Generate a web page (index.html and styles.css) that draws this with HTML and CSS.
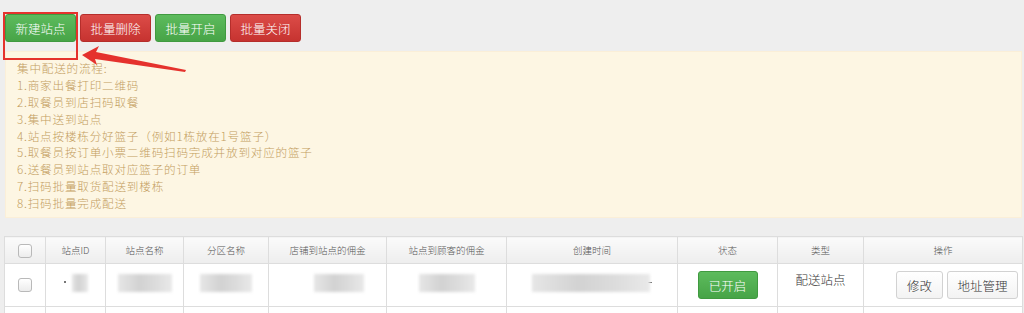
FILE: index.html
```html
<!DOCTYPE html>
<html lang="zh-CN">
<head>
<meta charset="utf-8">
<title>站点管理</title>
<link rel="stylesheet" href="styles.css">
</head>
<body>
<div class="page">
  <div class="toolbar">
    <button class="btn btn-green">新建站点</button>
    <button class="btn btn-red">批量删除</button>
    <button class="btn btn-green">批量开启</button>
    <button class="btn btn-red">批量关闭</button>
  </div>
  <div class="alert">
    <div class="line">集中配送的流程:</div>
    <div class="line">1.商家出餐打印二维码</div>
    <div class="line">2.取餐员到店扫码取餐</div>
    <div class="line">3.集中送到站点</div>
    <div class="line">4.站点按楼栋分好篮子（例如1栋放在1号篮子）</div>
    <div class="line">5.取餐员按订单小票二维码扫码完成并放到对应的篮子</div>
    <div class="line">6.送餐员到站点取对应篮子的订单</div>
    <div class="line">7.扫码批量取货配送到楼栋</div>
    <div class="line">8.扫码批量完成配送</div>
  </div>
  <table class="grid">
    <colgroup>
      <col class="c1"><col class="c2"><col class="c3"><col class="c4"><col class="c5">
      <col class="c6"><col class="c7"><col class="c8"><col class="c9"><col class="c10">
    </colgroup>
    <thead>
      <tr>
        <th><span class="chk"></span></th>
        <th>站点ID</th>
        <th>站点名称</th>
        <th>分区名称</th>
        <th>店铺到站点的佣金</th>
        <th>站点到顾客的佣金</th>
        <th>创建时间</th>
        <th>状态</th>
        <th>类型</th>
        <th>操作</th>
      </tr>
    </thead>
    <tbody>
      <tr>
        <td class="mid"><span class="chk"></span></td>
        <td><span class="dot"></span><span class="blur b-id"></span></td>
        <td><span class="blur b-name"></span></td>
        <td><span class="blur b-zone"></span></td>
        <td><span class="blur b-fee1"></span></td>
        <td><span class="blur b-fee2"></span></td>
        <td><span class="blur b-time"></span><span class="dash"></span></td>
        <td class="mid"><span class="btn btn-green btn-state">已开启</span></td>
        <td class="type">配送站点</td>
        <td class="ops"><span class="btn btn-white">修改</span><span class="btn btn-white btn-wide">地址管理</span></td>
      </tr>
      <tr class="next">
        <td></td><td></td><td></td><td></td><td></td><td></td><td></td><td></td><td></td><td></td>
      </tr>
    </tbody>
  </table>

  <div class="mark-box"></div>
  <svg class="mark-arrow" width="200" height="80" viewBox="0 0 200 80">
    <polygon points="82,55 99,46 96,52 186,70 185,72 95,59 97,65" fill="#e5322d"/>
  </svg>
</div>
</body>
</html>
```
FILE: styles.css
```css
html, body {
  margin: 0;
  padding: 0;
  background: #eeeeee;
}
body {
  font-family: "Noto Sans CJK SC", "Noto Sans", sans-serif;
  width: 1024px;
  height: 313px;
  overflow: hidden;
}
.page {
  position: relative;
  padding: 14px 2px 0 4px;
}
.toolbar {
  display: flex;
  gap: 4px;
  padding-left: 1px;
}
.btn {
  display: inline-flex;
  align-items: center;
  justify-content: center;
  box-sizing: border-box;
  width: 71px;
  height: 28px;
  padding: 0;
  border-radius: 3px;
  font-family: inherit;
  font-size: 12.5px;
  font-weight: 300;
  color: #fff;
  border: 1px solid transparent;
  cursor: pointer;
}
.btn-green {
  background: linear-gradient(#5dbb5d, #47a447);
  border-color: #409a40;
}
.btn-red {
  background: linear-gradient(#dc4c48, #c63330);
  border-color: #b52e2b;
}
.btn-white {
  background: linear-gradient(#ffffff, #f3f3f3);
  border-color: #d2d2d2;
  color: #333;
  width: 47px;
}
.btn-wide { width: 71px; }
.btn-state { width: 60px; }

.alert {
  margin: 9px 0 0 1px;
  height: 167px;
  box-sizing: border-box;
  padding: 8px 11px 0;
  background: #fdf6e3;
  border: 1px solid #fbefd8;
  color: #c39d5e;
  font-size: 11.6px;
  letter-spacing: 0.8px;
  font-weight: 300;
}
.line {
  height: 16.9px;
  line-height: 16.9px;
}

.grid {
  margin-top: 18px;
  width: 1018px;
  table-layout: fixed;
  border-collapse: collapse;
  background: #fff;
}
.c1 { width: 41px; }
.c2 { width: 60px; }
.c3 { width: 78px; }
.c4 { width: 85px; }
.c5 { width: 118px; }
.c6 { width: 120px; }
.c7 { width: 171px; }
.c8 { width: 100px; }
.c9 { width: 86px; }
.c10 { width: 159px; }

.grid th, .grid td {
  border: 1px solid #dddddd;
  padding: 0;
  text-align: center;
}
.grid th {
  height: 26px;
  background: linear-gradient(#fbfbfb, #eeeeee);
  font-weight: 300;
  font-size: 9.5px;
  color: #555;
  vertical-align: middle;
}
.grid tbody tr:first-child td {
  height: 43px;
  vertical-align: top;
  padding-top: 7px;
  box-sizing: border-box;
  font-size: 12.5px;
  font-weight: 300;
  color: #333;
}
.grid tbody td.mid { padding-top: 7px; }
.grid td.type { padding-top: 8px; line-height: 17px; }
.grid td.ops {
  text-align: right;
  padding-right: 4px;
}
.ops .btn { margin-left: 4px; }
.grid tr.next td { height: 12px; }

.chk {
  display: inline-block;
  width: 12px;
  height: 12px;
  border: 1px solid #b9b9b9;
  border-radius: 3px;
  background: linear-gradient(#ffffff, #ececec);
  vertical-align: middle;
}
.grid tbody td.mid .chk { margin-top: 4px; }

.blur {
  display: inline-block;
  height: 18px;
  margin-top: 3px;
  background: linear-gradient(90deg, #e6e6e6, #d2d2d2 40%, #dcdcdc 70%, #e9e9e9);
  filter: blur(1.5px);
  vertical-align: top;
}
.b-id { width: 16px; }
.b-name { width: 54px; }
.b-zone { width: 52px; }
.b-fee1 { width: 50px; margin-left: 22px; }
.b-fee2 { width: 56px; }
.b-time { width: 118px; }
.dot {
  display: inline-block;
  width: 2px;
  height: 2px;
  background: #777;
  margin: 10px 6px 0 0;
  vertical-align: top;
}
.dash {
  display: inline-block;
  width: 4px;
  height: 1px;
  background: #666;
  margin: 11px 0 0 -2px;
  vertical-align: top;
}

.mark-box {
  position: absolute;
  left: 3px;
  top: 12px;
  width: 71px;
  height: 44px;
  border: 2px solid #e5322d;
}
.mark-arrow {
  position: absolute;
  left: 0;
  top: 0;
}
```
